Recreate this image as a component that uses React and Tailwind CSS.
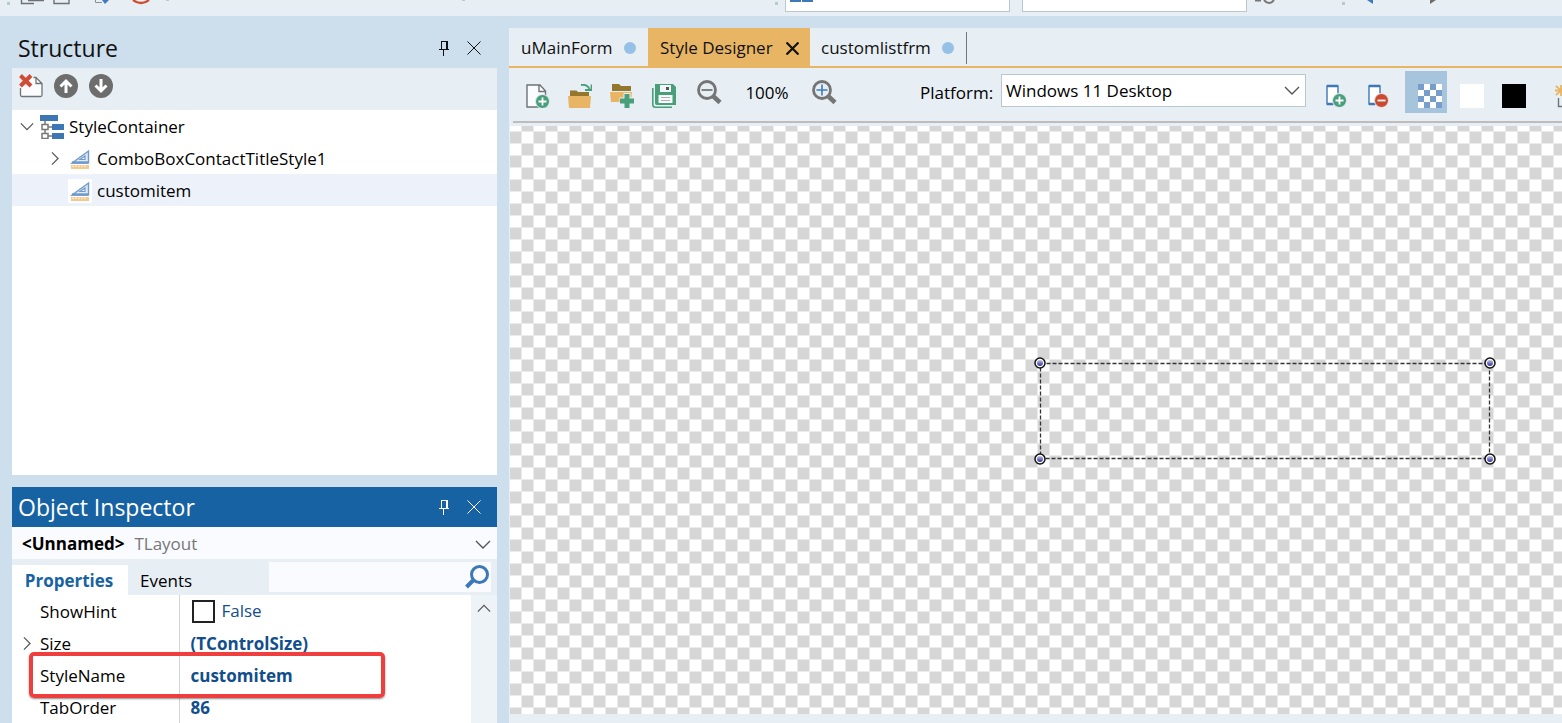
import { useState } from "react";

const ChevronIcon = ({ className }) => (
	<svg width="16" height="9" viewBox="0 0 16 9" className={className}>
		<path d="M1 1L8 8L15 1" fill="none" stroke="currentColor" strokeWidth="1.4" />
	</svg>
);

const PinIcon = () => (
	<svg width="10" height="16" viewBox="0 0 10 16" shapeRendering="crispEdges">
		<path
			d="M2.5 9V1.5H8.5V9M7.5 1.5V9M0 9.5H10M4.5 9.5V16"
			fill="none"
			stroke="currentColor"
		/>
	</svg>
);

const CloseIcon = ({ size, strokeWidth }) => (
	<svg width={size} height={size} viewBox="0 0 14 14">
		<path d="M0.5 0.5L13.5 13.5M13.5 0.5L0.5 13.5" fill="none" stroke="currentColor" strokeWidth={strokeWidth} />
	</svg>
);

const ArrowIcon = ({ down }) => (
	<svg width="24" height="24" viewBox="0 0 24 24">
		<circle cx="12" cy="12" r="12" fill="#6d6d6d" />
		<path
			d={down ? "M12 5V17M6.5 11.5L12 17L17.5 11.5" : "M12 19V7M6.5 12.5L12 7L17.5 12.5"}
			fill="none"
			stroke="#fff"
			strokeWidth="3"
		/>
	</svg>
);

const DeleteItemIcon = () => (
	<svg width="24" height="24" viewBox="0 0 24 24">
		<path d="M2 12V21Q2 22 3 22H22Q23 22 23 21V9L18 3H10V12Z" fill="#fbfcfd" />
		<path d="M1.5 14V21Q1.5 22.5 3 22.5H21.5Q23 22.5 23 21V9.5L17 3.5H14.5M17 3.5V9.5H23" fill="none" stroke="#707478" strokeWidth="1.3" />
		<path d="M1.5 1.5L12 12M12 1.5L1.5 12" stroke="#cf4b33" strokeWidth="4" />
	</svg>
);

const TreeRootIcon = () => (
	<svg width="24" height="24" viewBox="0 0 24 24">
		<path d="M0 0H18V6H0ZM12 9H24V15H12ZM12 18H24V24H12Z" fill="#3c77b4" />
		<path d="M5 6V9M5 15V18M8 12H12M8 21H12" stroke="#777" strokeWidth="1.5" />
		<path d="M2 9.5H8V14.5H2ZM2 18.5H8V23.5H2Z" fill="#fff" stroke="#777" strokeWidth="1.5" />
	</svg>
);

const StyleItemIcon = () => (
	<svg width="24" height="24" viewBox="0 0 24 24" className="bg-white">
		<path d="M4 16L20.5 4V16Z" fill="#dfe9f4" stroke="#6f9aca" strokeWidth="1.4" />
		<path d="M4 15.500H20" stroke="#6f9aca" strokeWidth="2.4" />
		<path d="M12 12.500L17 9V12.500Z" fill="#fff" stroke="#6f9aca" strokeWidth="1.2" />
		<path d="M3 18H21V22H3Z" fill="#f2c98f" />
		<path d="M5 18.5V20M8 18.5V20M11 18.5V20M14 18.5V20M17 18.5V20" stroke="#fff" />
	</svg>
);

const NewFileIcon = () => (
	<svg width="24" height="24" viewBox="0 0 24 24">
		<path d="M1 1H14L19.5 7V23H1Z" fill="#fbfcfd" stroke="#6e7276" strokeWidth="1.4" />
		<path d="M13 1V7.5H19.5" fill="none" stroke="#6e7276" strokeWidth="1.4" />
		<circle cx="16.5" cy="17.5" r="7" fill="#4a9f7b" stroke="#e7eef4" />
		<path d="M12.5 17.5H20.5M16.5 13.5V21.5" stroke="#fff" strokeWidth="1.8" />
	</svg>
);

const OpenIcon = () => (
	<svg width="24" height="24" viewBox="0 0 24 24">
		<path d="M2 6.5H8.5L10 8H21V12H2Z" fill="#94762d" />
		<path d="M0 12H23L22 24H1Z" fill="#e7b564" />
		<path d="M13 1C18 0 20 2 21.5 5M23.5 0.5V6H17" fill="none" stroke="#4a9f7b" strokeWidth="1.8" />
	</svg>
);

const AddFolderIcon = () => (
	<svg width="24" height="24" viewBox="0 0 24 24">
		<path d="M2 0H9L11 2H21V7H2Z" fill="#94762d" />
		<path d="M0 8H22L21 18H1Z" fill="#e7b564" />
		<path d="M17 9V24M9.5 17H24" stroke="#e7eef4" strokeWidth="7" />
		<path d="M17 10V24M10 17H24" stroke="#4a9f7b" strokeWidth="5" />
	</svg>
);

const SaveIcon = () => (
	<svg width="24" height="24" viewBox="0 0 24 24">
		<path d="M0.8 4V20.5Q0.8 23.2 3.5 23.2H20" fill="none" stroke="#4a9f7b" strokeWidth="1.6" />
		<path d="M3 0H21L24 3V21H5Q3 21 3 19Z" fill="#4a9f7b" />
		<path d="M8 1H19V8H8Z" fill="#f2f6f8" />
		<path d="M14 3H17V6H14Z" fill="#555" />
		<path d="M6.5 11H20.5V19H6.5Z" fill="#f7f9fa" />
		<path d="M9 13.5H18M9 16.5H18" stroke="#b5b0ac" strokeWidth="1.2" />
	</svg>
);

const MagnifierIcon = ({ plus }) => (
	<svg width="25" height="25" viewBox="0 0 25 25">
		<circle cx="10" cy="10" r="8.5" fill="none" stroke="#757575" strokeWidth="2.8" />
		<path d="M16 16L23 22.5" stroke="#757575" strokeWidth="4.5" />
		{plus ? (
			<path d="M4.5 10H15.5M10 4.5V15.5" stroke="#3f7bbb" strokeWidth="1.6" />
		) : (
			<path d="M4.5 10H15.5" stroke="#757575" strokeWidth="1.8" />
		)}
	</svg>
);

const DeviceIcon = ({ add }) => (
	<svg width="24" height="24" viewBox="0 0 24 24">
		<path d="M1 2H12V20H1Z" fill="#fff" stroke="#3f78b7" strokeWidth="1.4" />
		<path d="M1 2H12M1 20H7" stroke="#3f78b7" strokeWidth="2.4" />
		<circle cx="13.5" cy="16.5" r="7" fill={add ? "#4a9f7b" : "#cb4a30"} stroke="#e7eef4" />
		<path
			d={add ? "M9.5 16.5H17.5M13.5 12.5V20.5" : "M9.5 16.5H17.5"}
			stroke="#fff"
			strokeWidth="1.8"
		/>
	</svg>
);

const CheckerIcon = () => (
	<svg width="24" height="24" viewBox="0 0 24 24" shapeRendering="crispEdges">
		<path d="M0 0H24V24H0Z" fill="#fff" />
		<path
			d="M0 0h6v6h-6zM12 0h6v6h-6zM6 6h6v6h-6zM18 6h6v6h-6zM0 12h6v6h-6zM12 12h6v6h-6zM6 18h6v6h-6zM18 18h6v6h-6z"
			fill="#779dca"
		/>
	</svg>
);

const SparkIcon = () => (
	<svg width="24" height="24" viewBox="0 0 24 24">
		<path d="M6 1V12M1 2L11 11M11 2L1 11M0 6.5H12" stroke="#e7b564" strokeWidth="1.8" />
		<path d="M3.5 14V22.5H18" fill="none" stroke="#707478" strokeWidth="1.4" />
	</svg>
);

// Square button of the designer toolbar, the glyph sits low and to the right
const ToolButton = ({ label, active, children }) => (
	<button
		type="button"
		aria-label={label}
		className={`h-[42px] w-[42px] shrink-0 pt-[13px] pr-[5px] pb-[5px] pl-[13px] ${active ? "bg-[#a7c4dd]" : ""}`}
	>
		{children}
	</button>
);

// Lower edge of the main IDE toolbar
const MainToolbar = () => (
	<header className="flex h-4 shrink-0 items-start overflow-hidden bg-[#e7eef4]">
		<svg width="785" height="12" viewBox="0 0 785 12" className="shrink-0">
			<path d="M7 2h3v3h-3zM166 0h3v1h-3zM462 0h3v1h-3zM775 2h3v3h-3z" fill="#b8cacf" />
			<path d="M21.5 0V3.5H34M28 0.5H44M54 0V3.5H69V0" fill="none" stroke="#6d7175" strokeWidth="1.4" />
			<path d="M95.5 0V2.5H102" fill="none" stroke="#8b9095" />
			<path d="M102 0H109L105 4Z" fill="#3f7bbb" />
			<path d="M133 0Q141 6 149 0" fill="none" stroke="#d2492f" strokeWidth="2.2" />
		</svg>
		<div className="h-3 w-[225px] shrink-0 border border-t-0 border-[#b8c7d0] bg-white pl-1">
			<svg width="24" height="2" viewBox="0 0 24 2">
				<path d="M0 0H11V2H0ZM12 0H23V2H12Z" fill="#3f78b7" />
			</svg>
		</div>
		<div className="ml-3 h-3 w-[225px] shrink-0 border border-t-0 border-[#b8c7d0] bg-white" />
		<svg width="200" height="12" viewBox="0 0 200 12" className="shrink-0">
			<path d="M8 0.5H14M17 0Q22 6 27 0" fill="none" stroke="#777" strokeWidth="2" />
			<path d="M95 2h3v3h-3z" fill="#b8cacf" />
			<path d="M120 0H126V4Z" fill="#3f7bbb" />
			<path d="M183 0H189L183 4Z" fill="#6d6d6d" />
		</svg>
	</header>
);

const PanelHeader = ({ title, active }) => (
	<div
		className={`flex h-10 items-center pl-[6px] pr-4 ${active ? "bg-[#1762a2] text-white" : "text-[#111]"}`}
	>
		<h2 className="flex-1 text-[23px] leading-8">{title}</h2>
		<button type="button" aria-label={`Pin ${title}`} className="mr-[18px]">
			<PinIcon />
		</button>
		<button type="button" aria-label={`Close ${title}`}>
			<CloseIcon size={14} strokeWidth={1} />
		</button>
	</div>
);

const StructurePanel = () => (
	<section className="flex min-h-0 flex-1 flex-col">
		<PanelHeader title="Structure" />
		<div className="flex h-[42px] shrink-0 gap-[11px] bg-[#e7eef4] pl-[7px] pt-[6px]">
			<button type="button" aria-label="Delete item" className="h-6">
				<DeleteItemIcon />
			</button>
			<button type="button" aria-label="Move up" className="h-6">
				<ArrowIcon />
			</button>
			<button type="button" aria-label="Move down" className="h-6">
				<ArrowIcon down />
			</button>
		</div>
		<ul className="flex-1 bg-white text-black">
			<li className="flex h-8 items-center pl-2 pt-px">
				<ChevronIcon className="mr-[6px] w-[14px] text-[#555]" />
				<TreeRootIcon />
				<span className="ml-[5px]">StyleContainer</span>
			</li>
			<li className="flex h-8 items-center pl-9 pt-px">
				<ChevronIcon className="mr-[6px] w-[14px] -rotate-90 text-[#555]" />
				<StyleItemIcon />
				<span className="ml-[5px]">ComboBoxContactTitleStyle1</span>
			</li>
			<li className="flex h-8 items-center bg-[#edf2fa] pl-14 pt-px">
				<StyleItemIcon />
				<span className="ml-[5px]">customitem</span>
			</li>
		</ul>
	</section>
);

const properties = [
	{ name: "ShowHint", value: false },
	{ name: "Size", value: "(TControlSize)", expandable: true },
	{ name: "StyleName", value: "customitem", highlighted: true },
	{ name: "TabOrder", value: "86" },
];

const PropertyRow = ({ item }) => {
	const [checked, setChecked] = useState(item.value === true);

	return (
		<tr className="h-8">
			<th scope="row" className="relative w-[167px] border-r border-[#d4d4d4] p-0 text-left font-normal text-black">
				<div className="flex h-8 items-center pl-2 pt-px">
					<span className="w-5">
						{item.expandable && <ChevronIcon className="w-[14px] -rotate-90 text-[#555]" />}
					</span>
					{item.name}
				</div>
				{item.highlighted && (
					<div className="pointer-events-none absolute -top-[7px] left-[17px] z-10 h-[46px] w-[356px] rounded-[5px] border-4 border-[#ef3e3e] shadow-[0_1px_2px_rgba(0,0,0,0.45)]" />
				)}
			</th>
			<td className="p-0 pl-[11px] text-[#124e8b]">
				{typeof item.value === "boolean" ? (
					<label className="flex h-8 items-center gap-[7px] pl-px">
						<input
							type="checkbox"
							checked={checked}
							onChange={(e) => setChecked(e.target.checked)}
							className="h-[23px] w-[23px] appearance-none border-2 border-[#222] bg-white checked:bg-[#1762a2]"
						/>
						{checked ? "True" : "False"}
					</label>
				) : (
					<span className="flex h-8 items-center pt-px font-bold">{item.value}</span>
				)}
			</td>
		</tr>
	);
};

const ObjectInspector = () => (
	<section className="shrink-0">
		<PanelHeader title="Object Inspector" active />
		<div className="relative flex h-8 items-center gap-[10px] bg-[#f9fbfe] pl-[10px] pr-[6px] pt-[2px]">
			<span className="font-bold text-black">&lt;Unnamed&gt;</span>
			<span className="flex-1 text-[#777]">TLayout</span>
			<ChevronIcon className="text-[#555]" />
			<select aria-label="Selected object" className="absolute inset-0 h-full w-full opacity-0">
				<option>&lt;Unnamed&gt; TLayout</option>
			</select>
		</div>
		<div className="flex h-9 items-end bg-[#e7eef4]">
			<button type="button" className="h-[30px] w-[116px] bg-white pr-[2px] pt-[2px] font-bold text-[#1762a2]">
				Properties
			</button>
			<button type="button" className="h-[30px] px-3 pt-[2px] text-black">
				Events
			</button>
			<label className="mb-[3px] ml-auto mr-[6px] flex h-[30px] w-[222px] items-center bg-[#f9fbfe] pr-[2px]">
				<input type="text" aria-label="Search properties" className="min-w-0 flex-1 px-2 outline-none" />
				<svg width="24" height="24" viewBox="0 0 24 24">
					<circle cx="14.5" cy="9.5" r="8" fill="none" stroke="#3c78b8" strokeWidth="3" />
					<path d="M8.5 15L1.5 22" stroke="#3c78b8" strokeWidth="4" />
				</svg>
			</label>
		</div>
		<div className="flex bg-white">
			<table className="flex-1 border-collapse">
				<tbody className="block">
					{properties.map((item) => (
						<PropertyRow key={item.name} item={item} />
					))}
				</tbody>
			</table>
			<div className="w-[26px] bg-[#eef3f7]">
				<button type="button" aria-label="Scroll up" className="flex h-[26px] w-full items-center justify-center">
					<ChevronIcon className="w-[14px] rotate-180 text-[#555]" />
				</button>
			</div>
		</div>
	</section>
);

const EditorTabs = () => (
	<nav className="flex h-10 shrink-0 border-b-2 border-[#e7b564] text-[#111]">
		<button type="button" className="flex w-[139px] items-center justify-between pl-3 pr-3 pt-[2px]">
			uMainForm
			<span className="h-3 w-3 rounded-full bg-[#96c1e6]" />
		</button>
		<button type="button" className="flex w-[162px] items-center justify-between bg-[#e7b564] pl-3 pr-[11px] pt-[2px]">
			Style Designer
			<CloseIcon size={13} strokeWidth={2.4} />
		</button>
		<button type="button" className="flex w-[156px] items-center justify-between pl-[11px] pr-3 pt-[2px]">
			customlistfrm
			<span className="h-3 w-3 rounded-full bg-[#96c1e6]" />
		</button>
		<span className="mt-1 h-8 w-px bg-[#777]" />
	</nav>
);

const DesignerToolbar = () => (
	<div className="ml-1 flex h-[55px] shrink-0 border-b-2 border-[#bdbdbd] pt-[3px]">
		<ToolButton label="New style">
			<NewFileIcon />
		</ToolButton>
		<ToolButton label="Open style">
			<OpenIcon />
		</ToolButton>
		<ToolButton label="Add style">
			<AddFolderIcon />
		</ToolButton>
		<ToolButton label="Save style">
			<SaveIcon />
		</ToolButton>
		<div className="flex h-[42px] shrink-0 items-center pl-4 pt-px">
			<button type="button" aria-label="Zoom out">
				<MagnifierIcon />
			</button>
			<span className="w-[90px] text-center text-black">100%</span>
			<button type="button" aria-label="Zoom in">
				<MagnifierIcon plus />
			</button>
		</div>
		<div className="ml-[83px] flex h-[42px] shrink-0 items-center text-black">
			<label htmlFor="platform" className="w-[81px] pt-px">
				Platform:
			</label>
			<div className="relative mb-1">
				<select
					id="platform"
					className="block h-[33px] w-[305px] appearance-none border border-[#b8c7d0] bg-white px-1 pt-px outline-none"
				>
					<option>Windows 11 Desktop</option>
				</select>
				<ChevronIcon className="pointer-events-none absolute right-[6px] top-3 text-[#555]" />
			</div>
		</div>
		<div className="ml-[7px] flex shrink-0">
			<ToolButton label="Add platform">
				<DeviceIcon add />
			</ToolButton>
			<ToolButton label="Remove platform">
				<DeviceIcon />
			</ToolButton>
		</div>
		<div className="ml-2 flex shrink-0">
			<ToolButton label="Checkered background" active>
				<CheckerIcon />
			</ToolButton>
			<ToolButton label="White background">
				<span className="block h-6 w-6 bg-white" />
			</ToolButton>
			<ToolButton label="Black background">
				<span className="block h-6 w-6 bg-black" />
			</ToolButton>
		</div>
		<div className="ml-[11px]">
			<ToolButton label="Highlight">
				<SparkIcon />
			</ToolButton>
		</div>
	</div>
);

const handles = [
	[6, 6],
	[456, 6],
	[6, 102],
	[456, 102],
];

const DesignCanvas = () => (
	<div className="relative ml-px mt-[3px] flex-1 bg-[linear-gradient(to_right,transparent_11px,#ebebeb_11px),linear-gradient(transparent_11px,#ebebeb_11px),conic-gradient(#fff_25%,#d6d6d6_0_50%,#fff_0_75%,#d6d6d6_0)] bg-[length:12px_12px,12px_12px,24px_24px] bg-[position:0_6px]">
		<svg width="462" height="108" viewBox="0 0 462 108" className="absolute left-[524px] top-[231px]">
			<defs>
				<linearGradient id="handle" x1="0" y1="0" x2="0" y2="1">
					<stop offset="0" stopColor="#c4c4e4" />
					<stop offset="1" stopColor="#3030a0" />
				</linearGradient>
			</defs>
			<path
				d="M6.5 6.5H455.5V101.5H6.5Z"
				fill="none"
				stroke="#333"
				strokeWidth="1.3"
				strokeDasharray="4 2"
			/>
			{handles.map(([x, y]) => (
				<g key={`${x}-${y}`}>
					<circle cx={x} cy={y} r="5" fill="#fff" stroke="#111" strokeWidth="1.5" />
					<circle cx={x} cy={y} r="3" fill="url(#handle)" />
				</g>
			))}
		</svg>
	</div>
);

const App = () => {
	return (
		<div className="flex h-screen flex-col overflow-hidden bg-[#cddeec] font-['Open_Sans','Noto_Sans',sans-serif] text-[17px] leading-6">
			<MainToolbar />
			<main className="flex min-h-0 flex-1 gap-3 pl-3 pt-3">
				<aside className="flex w-[485px] shrink-0 flex-col gap-3">
					<StructurePanel />
					<ObjectInspector />
				</aside>
				<section className="flex min-w-0 flex-1 flex-col overflow-hidden bg-[#e7eef4] pb-[9px]">
					<EditorTabs />
					<DesignerToolbar />
					<DesignCanvas />
				</section>
			</main>
		</div>
	);
};

export default App;
